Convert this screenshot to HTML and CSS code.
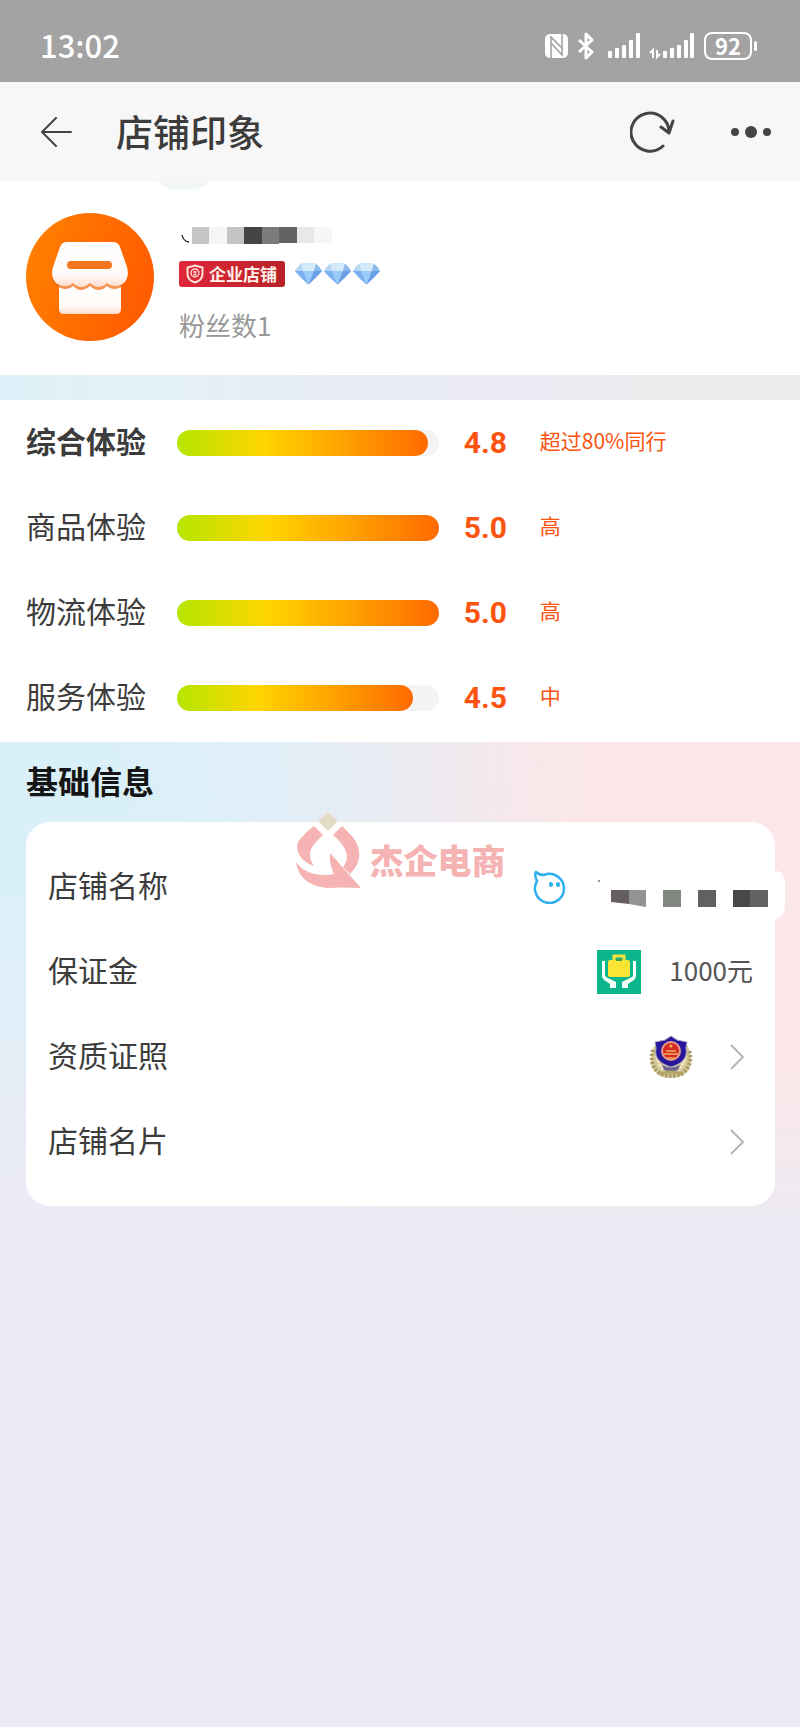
FILE: index.html
```html
<!DOCTYPE html>
<html lang="zh-CN">
<head>
  <meta charset="UTF-8" />
  <meta name="viewport" content="width=device-width, initial-scale=1" />
  <title>店铺印象</title>
  <link rel="stylesheet" href="styles.css">
</head>
<body>
  <div class="status-bar">
    <span class="time">13:02</span>
    <div class="status-icons">
      <svg width="150" height="28" viewBox="0 0 150 28" fill="#fff">
        <!-- NFC -->
        <rect x="0" y="2" width="23" height="24" rx="5"/>
        <path d="M6 26V5l12 12M17 2v21L6 11" fill="none" stroke="#a3a3a3" stroke-width="1.600"/>
        <!-- bluetooth -->
        <path d="M34 8l13 12-6 6V2l6 6-13 12" fill="none" stroke="#fff" stroke-width="3" stroke-linejoin="round"/>
        <!-- sim 1 -->
        <rect x="63" y="19" width="4" height="7" rx="1"/>
        <rect x="70" y="16" width="4" height="10" rx="1"/>
        <rect x="77" y="13" width="4" height="13" rx="1"/>
        <rect x="84" y="8" width="4" height="18" rx="1"/>
        <rect x="91" y="1" width="4" height="25" rx="1"/>
        <!-- sim 2 -->
        <path d="M105 21l3-3v8M112 18v7l3-3" fill="none" stroke="#fff" stroke-width="2"/>
        <rect x="118" y="19" width="4" height="7" rx="1"/>
        <rect x="125" y="16" width="4" height="10" rx="1"/>
        <rect x="132" y="13" width="4" height="13" rx="1"/>
        <rect x="139" y="8" width="4" height="18" rx="1"/>
        <rect x="145" y="1" width="4" height="25" rx="1"/>
      </svg>
      <span class="battery">92</span>
      <span class="battery-tip"></span>
    </div>
  </div>

  <header class="nav">
    <button class="icon-btn back" aria-label="返回">
      <svg width="32" height="30" viewBox="0 0 32 30" fill="none" stroke="#444" stroke-width="2" stroke-linecap="round" stroke-linejoin="round">
        <path d="M16 1L2 15l14 14M2 15h29"/>
      </svg>
    </button>
    <h1>店铺印象</h1>
    <button class="icon-btn refresh" aria-label="刷新">
      <svg width="46" height="42" viewBox="0 0 46 42" fill="none" stroke="#444" stroke-width="3" stroke-linecap="round" stroke-linejoin="round">
        <path d="M33 35A19 19 0 1 1 39 21M31 16l8 6 4-12"/>
      </svg>
    </button>
    <button class="icon-btn" aria-label="更多">
      <svg width="42" height="14" viewBox="0 0 42 14" fill="#444">
        <circle cx="5" cy="7" r="4"/>
        <circle cx="21" cy="7" r="6"/>
        <circle cx="37" cy="7" r="4"/>
      </svg>
    </button>
  </header>

  <section class="profile">
    <svg class="avatar" viewBox="0 0 128 128">
      <defs>
        <linearGradient id="orange" x1="0" y1="0" x2="1" y2="0.3">
          <stop offset="0" stop-color="#ff8200"/>
          <stop offset="1" stop-color="#ff5e00"/>
        </linearGradient>
        <linearGradient id="roof" x1="0" y1="0" x2="0" y2="1">
          <stop offset="0" stop-color="#fff"/>
          <stop offset="0.75" stop-color="#fffaf8"/>
          <stop offset="1" stop-color="#ffdccb"/>
        </linearGradient>
      </defs>
      <circle cx="64" cy="64" r="64" fill="url(#orange)"/>
      <path d="M33 70h62v26q0 5-5 5H38q-5 0-5-5z" fill="url(#roof)"/>
      <path d="M41 29h46q5 0 7 5l7 20c3 12-2 21-12 22q-5 0-8-3-8 8-17 0-9 8-17 0-3 3-8 3c-10-1-15-10-12-22l7-20q2-5 7-5z" fill="#ef650c" opacity=".7"/>
      <path d="M41 29h46q5 0 7 5l7 20c3 11-2 19-12 19q-5 0-8-3-8 8-17 0-9 8-17 0-3 3-8 3c-10 0-15-8-12-19l7-20q2-5 7-5z" fill="url(#roof)"/>
      <rect x="41" y="48" width="45" height="8" rx="4" fill="#f4731d"/>
    </svg>
    <div class="profile-info">
      <svg class="masked-name" width="153" height="18" viewBox="0 0 153 18">
        <path d="M3 8q1 6 7 7-5 0-7-7z" fill="#222" stroke="#222"/>
        <rect x="13" width="17" height="17" fill="#c6c6c6"/>
        <rect x="30" width="18" height="17" fill="#f5f5f5"/>
        <rect x="48" width="17" height="17" fill="#c4c4c4"/>
        <rect x="65" width="18" height="17" fill="#454545"/>
        <rect x="83" width="17" height="17" fill="#7b7b7b"/>
        <rect x="100" width="18" height="16" fill="#636363"/>
        <rect x="118" width="17" height="16" fill="#e6e9e8"/>
        <rect x="135" width="18" height="16" fill="#f6f6f6"/>
      </svg>
      <div class="tags">
        <span class="badge">
          <svg width="18" height="20" viewBox="0 0 18 20" fill="none" stroke="#ffe3dc">
            <path d="M9 1.500l7.500 2V10q0 6-7.500 8.500Q1.500 16 1.500 10V3.500z" stroke-width="2"/>
            <circle cx="9" cy="9" r="4" stroke-width="1.300"/>
            <path d="M7 8h4M9 7v4M7 11h4" stroke-width="1.200"/>
          </svg>
          <span class="badge-text">企业店铺</span>
        </span>
        <svg class="diamonds" width="86" height="22" viewBox="0 0 86 22">
          <defs>
            <g id="diamond">
              <path d="M6 1q7-2 15 0 4 3 6 7-6 8-13.500 13.500Q6 16 0 8q2-4 6-7z" fill="#8fbdf2"/>
              <path d="M6 1Q2 4 0 8h8z" fill="#b7d7f3"/>
              <path d="M6 1q7-2 15 0l-2 7H8z" fill="#d3eafb"/>
              <path d="M21 1q4 3 6 7h-8z" fill="#8cb9ec"/>
              <path d="M0 8h8l5.500 13.500z" fill="#78b1f0"/>
              <path d="M8 8h11l-5.500 13.500z" fill="#9accf9"/>
              <path d="M19 8h8L13.500 21.500z" fill="#6a9fe6"/>
            </g>
          </defs>
          <use href="#diamond"/>
          <use href="#diamond" x="29"/>
          <use href="#diamond" x="58"/>
        </svg>
      </div>
      <p class="fans">粉丝数1</p>
    </div>
  </section>

  <div class="strip"></div>

  <section class="scores">
    <div class="score-row total">
      <span class="score-label">综合体验</span>
      <div class="bar"><div class="fill" style="width: 96%"></div></div>
      <span class="score">4.8</span>
      <span class="note">超过80%同行</span>
    </div>
    <div class="score-row">
      <span class="score-label">商品体验</span>
      <div class="bar"><div class="fill" style="width: 100%"></div></div>
      <span class="score">5.0</span>
      <span class="note">高</span>
    </div>
    <div class="score-row">
      <span class="score-label">物流体验</span>
      <div class="bar"><div class="fill" style="width: 100%"></div></div>
      <span class="score">5.0</span>
      <span class="note">高</span>
    </div>
    <div class="score-row">
      <span class="score-label">服务体验</span>
      <div class="bar"><div class="fill" style="width: 90%"></div></div>
      <span class="score">4.5</span>
      <span class="note">中</span>
    </div>
  </section>

  <section class="basic">
    <h2>基础信息</h2>
    <div class="card">
      <div class="info-row shop-name">
        <span class="info-label">店铺名称</span>
        <svg width="34" height="34" viewBox="0 0 34 34" fill="none" stroke="#2fb0ee" stroke-width="2.500" stroke-linejoin="round">
          <path d="M4 11Q1 5 3 2q3 3 8 3A14.500 14.500 0 1 1 4 11z"/>
          <path d="M18 14v1M25 14v1" stroke-width="4" stroke-linecap="round"/>
        </svg>
      </div>
      <div class="info-row">
        <span class="info-label">保证金</span>
        <span class="value">
          <svg width="44" height="44" viewBox="0 0 44 44">
            <rect width="44" height="44" fill="#0bb68c"/>
            <path d="M17 11V6h10v5" fill="none" stroke="#f8e33c" stroke-width="3"/>
            <rect x="11" y="10" width="22" height="17" rx="2" fill="#fbe534"/>
            <path d="M19 10h6" stroke="#4b9b50" stroke-width="2"/>
            <path d="M5 11h3v14q0 2 3 3l8 4v6h-6v-4l-6-4q-2-2-2-4zM39 11h-3v14q0 2-3 3l-8 4v6h6v-4l6-4q2-2 2-4z" fill="#f2fffb"/>
          </svg>
          <span class="amount">1000元</span>
        </span>
      </div>
      <a class="info-row" href="#license">
        <span class="info-label">资质证照</span>
        <span class="value">
          <svg width="44" height="44" viewBox="0 0 44 44">
            <path d="M6 10C-1 22 1 36 11 41q11 4 22 0c10-5 12-19 5-31z" fill="#d3c795"/>
            <path d="M4 15C1 24 3 34 12 39q10 4 20 0c9-5 11-15 8-24" fill="none" stroke="#a5995f" stroke-width="4" stroke-dasharray="2 2"/>
            <path d="M8 21C9 32 15 36 22 36s13-4 14-15" fill="none" stroke="#efe8c5" stroke-width="3" stroke-dasharray="3 1"/>
            <path d="M22 1l6 4 10 2-1 6c2 11-5 16-15 19C12 29 5 24 7 13L6 7l10-2z" fill="#27179a" stroke="#aaa5c4"/>
            <circle cx="22" cy="16" r="9" fill="#d62a22" stroke="#e79a8b" stroke-width="2"/>
            <path d="M15 19h14M17 16h10M18 23h8" stroke="#efb05f" stroke-width="1.500"/>
            <circle cx="22" cy="11" r="1.500" fill="#f6bf57"/>
            <path d="M13 30q9 5 18 0l-2 5q-7 3-14 0z" fill="#6b6490"/>
            <path d="M11 39q11-4 22 0" fill="none" stroke="#b3a468" stroke-width="3"/>
          </svg>
          <svg class="arrow" width="16" height="28" viewBox="0 0 16 28"><path d="M2 2l12 12L2 26"/></svg>
        </span>
      </a>
      <a class="info-row" href="#card">
        <span class="info-label">店铺名片</span>
        <span class="value">
          <svg class="arrow" width="16" height="28" viewBox="0 0 16 28"><path d="M2 2l12 12L2 26"/></svg>
        </span>
      </a>

      <svg class="masked-shop" width="190" height="48" viewBox="0 0 190 48">
        <path d="M0 0h182q8 2 8 12v24q0 8-8 12H0z" fill="#fff"/>
        <circle cx="4" cy="10" r="1" fill="#777"/>
        <path d="M16 19h18v14l-18-2z" fill="#655f64"/>
        <path d="M34 19h17v17l-17-3z" fill="#929492"/>
        <rect x="68" y="19" width="18" height="17" fill="#828681"/>
        <rect x="103" y="19" width="18" height="17" fill="#606160"/>
        <rect x="138" y="19" width="17" height="17" fill="#484848"/>
        <rect x="155" y="19" width="18" height="17" fill="#636163"/>
      </svg>

      <div class="watermark">
        <svg width="66" height="78" viewBox="0 0 66 78" fill="#f5b3b3">
          <path d="M32 0l10 9-10 10-10-10z" fill="#e2dcc8"/>
          <path d="M18 14l9 9C14 35 10 42 18 54 2 49-4 33 6 25q6-7 12-11z"/>
          <path d="M46 14l-9 9C52 36 54 46 47 55l7 7C68 48 64 34 56 24z"/>
          <path d="M0 50q10 14 32 13l6-1q-5-9-4-21l31 35q-19-1-33 0C10 74 2 63 0 50z"/>
        </svg>
        <span>杰企电商</span>
      </div>
    </div>
  </section>
</body>
</html>
```

FILE: styles.css
```css
:root {
  --page-bg: #ebebf5;
  --text: #3c3c3c;
  --accent: #fa5410;
  --side: 26px;
}

* {
  box-sizing: border-box;
}

body {
  margin: 0;
  min-height: 100vh;
  background: var(--page-bg);
  color: var(--text);
  font-family: "Noto Sans CJK SC", sans-serif;
  font-size: 30px;
}

h1, h2, p {
  margin: 0;
}

svg {
  display: block;
  flex-shrink: 0;
}

.status-bar {
  display: flex;
  align-items: center;
  justify-content: space-between;
  height: 82px;
  padding: 10px 43px 0 40px;
  background: #a3a3a3;
  color: #fff;
}

.time {
  padding-bottom: 4px;
  font-size: 31px;
  font-weight: 500;
}

.status-icons {
  display: flex;
  align-items: center;
}

.battery {
  width: 48px;
  height: 28px;
  margin-left: 9px;
  border: 2px solid #fff;
  border-radius: 8px;
  font-size: 22px;
  font-weight: 700;
  line-height: 22px;
  text-align: center;
}

.battery-tip {
  width: 3px;
  height: 10px;
  margin-left: 2px;
  border-radius: 2px;
  background: #fff;
}

.nav {
  display: flex;
  align-items: center;
  height: 99px;
  padding: 0 28px 0 40px;
  background: #f7f7f7;
}

.nav h1 {
  flex: 1;
  margin-left: 44px;
  padding-bottom: 2px;
  font-size: 37px;
  font-weight: 500;
}

.icon-btn {
  padding: 0;
  border: none;
  background: none;
  cursor: pointer;
}

.refresh {
  margin-right: 54px;
}

.profile {
  display: flex;
  gap: 25px;
  padding: 32px var(--side) 30px;
  background:
    radial-gradient(ellipse 28px 10px at 23% 0, #f1f8f3 80%, rgba(241, 248, 243, 0)),
    #fff;
}

.avatar {
  width: 128px;
  height: 128px;
}

.profile-info {
  padding-top: 14px;
}

.tags {
  display: flex;
  align-items: center;
  gap: 10px;
  margin: 16px 0 20px;
}

.badge {
  display: flex;
  align-items: center;
  gap: 5px;
  height: 26px;
  padding: 0 8px 0 7px;
  border-radius: 3px;
  background: linear-gradient(90deg, #e0273a, #b92227);
  color: #fff0e8;
  font-size: 17px;
  font-weight: 700;
}

.badge-text {
  padding-bottom: 2px;
}

.fans {
  padding-bottom: 2px;
  color: #999;
  font-size: 26px;
  line-height: 36px;
}

.strip {
  height: 25px;
  background: linear-gradient(90deg, #def1f8, #e3f1f5 20%, #e8ebf5 45%, #ebebf5 65%, #ebebee 80%);
}

.scores {
  padding-bottom: 2px;
  background: #fff;
}

.score-row {
  display: flex;
  align-items: center;
  height: 85px;
  padding: 0 var(--side);
}

.score-label,
.info-label,
.amount,
.note {
  padding-bottom: 5px;
}

.score-label {
  width: 151px;
}

.total .score-label {
  font-weight: 700;
}

.bar {
  width: 35%;
  height: 26px;
  border-radius: 13px;
  background: #f4f4f4;
}

.fill {
  height: 100%;
  border-radius: 13px;
  background: linear-gradient(90deg, #b4e600, #ffd500 34%, #ff9c00 70%, #ff6a00);
}

.score {
  width: 76px;
  margin-left: 25px;
  color: var(--accent);
  font-family: Roboto, sans-serif;
  font-weight: 700;
}

.note {
  color: var(--accent);
  font-size: 21px;
}

.basic {
  padding: 0 25px 80px 26px;
  background:
    linear-gradient(180deg, rgba(235, 235, 245, 0) 60%, #ebebf5 92%),
    radial-gradient(ellipse 66% 76% at 0 10%, #d9f0f8 20%, rgba(235, 235, 245, 0)),
    linear-gradient(90deg, #ebebf5 30%, #fbe7e8 75%);
}

.basic h2 {
  padding-bottom: 4px;
  color: #151515;
  font-size: 32px;
  font-weight: 700;
  line-height: 76px;
}

.card {
  position: relative;
  padding: 22px;
  border-radius: 24px;
  background: #fff;
}

.info-row {
  display: flex;
  align-items: center;
  justify-content: space-between;
  height: 85px;
  color: var(--text);
  text-decoration: none;
}

.shop-name {
  padding-right: 186px;
}

.value {
  display: flex;
  align-items: center;
  gap: 28px;
  color: #555;
  font-size: 26px;
}

.arrow {
  margin: 0 8px;
  fill: none;
  stroke: #b5b5b5;
  stroke-width: 2;
}

/* blurred-out shop name, sticks out past the card edge */
.masked-shop {
  position: absolute;
  top: 49px;
  right: -10px;
}

.watermark {
  position: absolute;
  top: -10px;
  left: 36%;
  display: flex;
  align-items: center;
  gap: 8px;
  color: #f5b3b3;
  font-size: 34px;
  font-weight: 900;
}

.watermark span {
  padding-top: 16px;
}
```
